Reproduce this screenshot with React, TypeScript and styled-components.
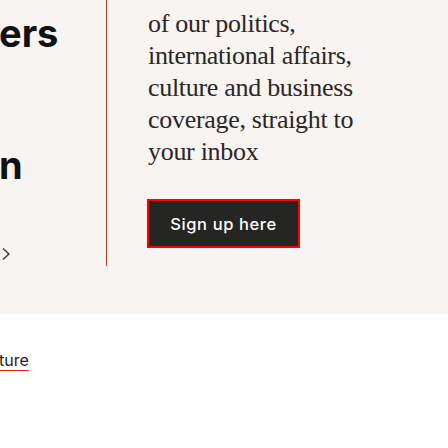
import React from "react";
import styled, { createGlobalStyle } from "styled-components";

const Global = createGlobalStyle`
  html, body { margin: 0; padding: 0; background: #ffffff; }
  body { width: 448px; height: 448px; overflow: hidden; font-family: Inter, "Liberation Sans", sans-serif; }
`;

const Panel = styled.section`
  background: #f8f4f1;
  height: 314px;
  display: grid;
  grid-template-columns: 107px 1fr;
  column-gap: 40px;
  align-items: start;
`;

const LeftCol = styled.div`
  height: 266px;
  border-right: 1px solid #b8372a;
  padding-top: 11px;
  box-sizing: border-box;
  display: flex;
  flex-direction: column;
  overflow: hidden;
`;

const HeadingLine = styled.div`
  font-family: Inter, "Liberation Sans", sans-serif;
  font-weight: 700;
  font-size: 38px;
  line-height: 44px;
  height: 44px;
  color: #111111;
  margin-left: -1px;
  white-space: nowrap;
`;

const MoreLink = styled.div`
  margin-top: 60px;
  margin-left: 1px;
  display: flex;
  align-items: center;
  color: #333;
`;

const RightCol = styled.div`
  padding-top: 8px;
  display: flex;
  flex-direction: column;
  align-items: flex-start;
`;

const Blurb = styled.p`
  margin: 0 0 0 1px;
  font-family: "Liberation Serif", serif;
  font-size: 26px;
  line-height: 32px;
  letter-spacing: -0.3px;
  color: #2a2726;
`;

const SignUp = styled.button`
  margin-top: 31px;
  width: 153px;
  height: 49px;
  background: #252624;
  border: 2px solid #ff0000;
  color: #ffffff;
  font-family: Inter, "Liberation Sans", sans-serif;
  font-weight: 500;
  font-size: 16.5px;
  letter-spacing: 0.6px;
  padding: 0;
  cursor: pointer;
`;

const Below = styled.div`
  padding-top: 36px;
`;

const TagLink = styled.a`
  display: inline-block;
  font-family: Inter, "Liberation Sans", sans-serif;
  font-size: 16px;
  line-height: 18px;
  color: #222;
  text-decoration: none;
  border-bottom: 1px solid #e0261b;
  padding-bottom: 1px;
  margin-left: -1px;
`;

export default function App() {
  return (
    <>
      <Global />
      <Panel>
        <LeftCol>
          <HeadingLine>ers</HeadingLine>
          <HeadingLine>&nbsp;</HeadingLine>
          <HeadingLine>&nbsp;</HeadingLine>
          <HeadingLine>n</HeadingLine>
          <MoreLink>
            <svg width="10" height="14" viewBox="0 0 10 14" fill="none">
              <path d="M2 1.5 L8 7 L2 12.5" stroke="#333" strokeWidth="1.3" />
            </svg>
          </MoreLink>
        </LeftCol>
        <RightCol>
          <Blurb>
            of our politics,
            <br />
            international affairs,
            <br />
            culture and business
            <br />
            coverage, straight to
            <br />
            your inbox
          </Blurb>
          <SignUp>Sign up here</SignUp>
        </RightCol>
      </Panel>
      <Below>
        <TagLink href="#">ture</TagLink>
      </Below>
    </>
  );
}
